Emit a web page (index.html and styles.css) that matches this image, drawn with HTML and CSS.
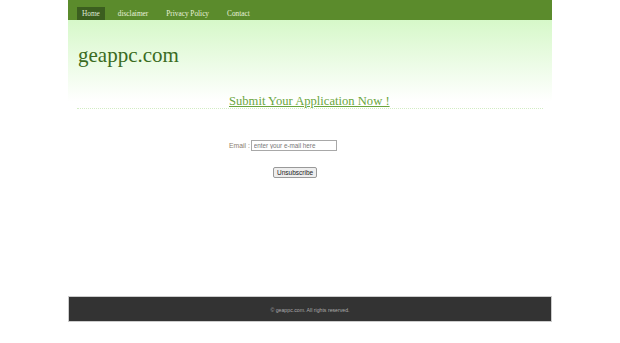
FILE: index.html
```html
<!DOCTYPE html>
<html>
<head>
<meta charset="utf-8">
<link rel="stylesheet" href="styles.css">
</head>
<body>
<div class="wrap">
  <nav class="nav">
    <a class="nav-item active" href="#">Home</a>
    <a class="nav-item" href="#">disclaimer</a>
    <a class="nav-item" href="#">Privacy Policy</a>
    <a class="nav-item" href="#">Contact</a>
  </nav>
  <header class="header">
    <h1 class="logo">geappc.com</h1>
    <div class="cta-row"><a class="cta" href="#">Submit Your Application Now !</a></div>
  </header>
  <div class="rule"></div>
  <main class="main">
    <form class="form">
      <div class="field"><label class="label">Email :</label><input class="input" type="text" placeholder="enter your e-mail here"></div>
      <div class="actions"><button class="btn" type="button">Unsubscribe</button></div>
    </form>
  </main>
  <footer class="footer">© geappc.com. All rights reserved.</footer>
</div>
</body>
</html>
```
FILE: styles.css
```css
html, body { margin: 0; padding: 0; background: #fff; }
.wrap { width: 484px; margin: 0 auto; font-family: "Liberation Serif", serif; }
.nav { background: #5b8b2c; height: 20px; display: flex; align-items: flex-end; padding-left: 9px; }
.nav-item { color: #e8f2dc; font-size: 7.3px; text-decoration: none; padding: 0 5px; height: 13px; line-height: 13px; margin-right: 8px; white-space: nowrap; }
.nav-item.active { background: #3b5e1f; color: #dfe9d5; }
.header { background: linear-gradient(#d6f8c9, #ffffff 95%); height: 86px; display: flex; flex-direction: column; }
.logo { margin: 0; padding: 23px 0 0 10px; font-weight: normal; font-size: 21px; line-height: 24px; color: #3a6b22; }
.cta-row { padding: 24px 0 0 161px; }
.cta { font-size: 12.6px; color: #6aa63c; text-decoration: underline; line-height: 14px; }
.rule { margin: 2px 9px 0 9px; border-top: 1px dotted #d2ecc4; }
.main { height: 187px; }
.form { padding-top: 31px; }
.field { display: flex; align-items: center; padding-left: 161px; gap: 1px; }
.label { font-family: "Liberation Sans", sans-serif; font-size: 6.8px; color: #8c7d6e; }
.input { width: 80px; height: 7px; padding: 1px 2px; font-family: "Liberation Sans", sans-serif; font-size: 6.3px; border: 1px solid #a8a8a8; color: #666; }
.input::placeholder { color: #777; }
.actions { padding: 10px 0 0 205px; }
.btn { font-family: "Liberation Sans", sans-serif; font-size: 6.5px; height: 11px; padding: 0 3px; border: 1px solid #999; background: #eee; border-radius: 2px; color: #222; line-height: 9px; }
.footer { background: #333; height: 26px; line-height: 26px; text-align: center; color: #aaa; font-family: "Liberation Sans", sans-serif; font-size: 5.2px; border: 1px solid #ccc; box-sizing: border-box; }
```
